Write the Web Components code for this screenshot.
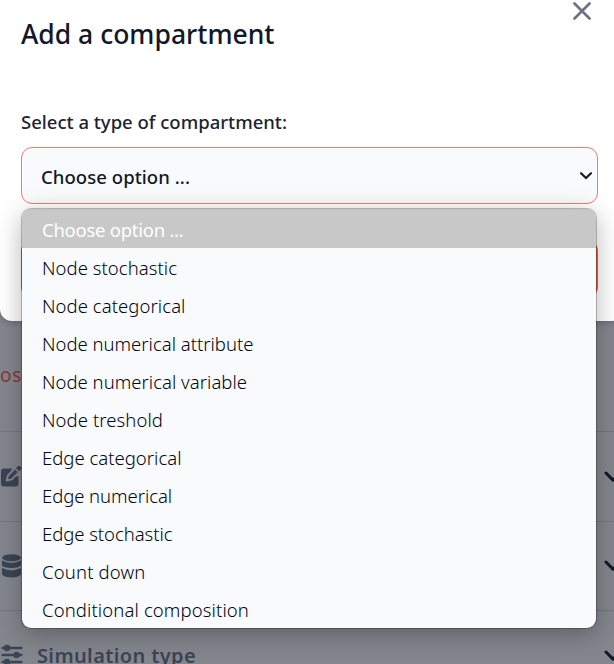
<!DOCTYPE html>
<html lang="en">
<head>
<meta charset="utf-8">
<title>Add a compartment</title>
<style>
html,body{margin:0;height:664px;overflow:hidden}
body{font-family:"Noto Sans","Open Sans",sans-serif;color:#111827;background:#84868e}
</style>
</head>
<body>
<app-screen></app-screen>
<script>
const define = (name, html, setup) => customElements.define(name, class extends HTMLElement {
  connectedCallback() {
    if (this.shadowRoot) return;
    const t = document.createElement('template');
    t.innerHTML = html;
    this.attachShadow({mode: 'open'}).append(t.content.cloneNode(true));
    if (setup) setup(this, this.shadowRoot);
  }
});

// A single line of text, tracked so that it fills the width given in "w".
define('fit-text', `<style>:host{display:block;white-space:nowrap}span{display:inline-block}</style><span><slot></slot></span>`,
  (el, root) => {
    const s = root.querySelector('span');
    const n = el.textContent.length;
    s.style.letterSpacing = ((+el.getAttribute('w') - s.getBoundingClientRect().width) / n) + 'px';
  });

const icons = {
  close: ['0 0 18 18', '<path d="M1.5 1.5 16.5 16.5M16.5 1.5 1.5 16.5" fill="none" stroke="currentColor" stroke-width="2.700" stroke-linecap="round"/>'],
  chevron: ['0 0 12 8', '<path d="M1 1.2 6 6 11 1.2" fill="none" stroke="currentColor" stroke-width="2.1" stroke-linecap="round" stroke-linejoin="miter"/>'],
  bigchevron: ['0 0 18 12', '<path d="M2 2 9 9.2 16 2" fill="none" stroke="currentColor" stroke-width="3" stroke-linecap="round" stroke-linejoin="round"/>'],
  edit: ['0 0 22 22', '<path d="M4 3.500H14V19H4Z M4 3.500H18.500V18.500Q18.500 21.500 15.500 21.500H4Q1 21.500 1 18.500V6.500Q1 3.500 4 3.500Z" fill="currentColor"/><path d="M12.500 2H20V11L15.500 11.500 9 12Z" fill="#84868e"/><path d="M7 15.500 8.300 10.800 14.800 4.300 18 7.500 11.500 14ZM16 3.100 17.600 1.500Q19.300.400 20.700 1.800T20.800 4.700L19.200 6.300Z" fill="currentColor"/><path d="M14.600 3.800 7.900 10.500 6.700 15.500 11.800 14.300 18.500 7.600" fill="none" stroke="#84868e" stroke-width="1.900" stroke-linejoin="round"/>'],
  database: ['0 0 20 24', '<g fill="currentColor"><ellipse cx="10" cy="3.700" rx="10" ry="3.500"/><path d="M0 6.500q10 4.800 20 0v4.500c-1 4-19 4-20 0z"/><path d="M0 14q10 4.800 20 0v6c-1 4.500-19 4.500-20 0z"/></g>'],
  sliders: ['0 0 22 22', '<g fill="none" stroke="currentColor" stroke-width="2.300" stroke-linecap="round"><path d="M1.500 4h19M1.500 11h19M1.500 18h19"/></g><g fill="currentColor"><circle cx="6" cy="4" r="3.200"/><circle cx="15.500" cy="11" r="3.200"/><circle cx="6" cy="18" r="3.200"/></g>']
};
define('ui-icon', `<style>:host{display:block;flex:none}svg{display:block;width:100%;height:100%}</style><svg></svg>`,
  (el, root) => {
    const s = root.querySelector('svg'), i = icons[el.getAttribute('name')];
    s.setAttribute('viewBox', i[0]);
    s.setAttribute('preserveAspectRatio', 'none');
    s.innerHTML = i[1];
  });

define('accordion-row', `<style>
:host{display:flex;align-items:center;box-sizing:border-box;height:89.500px;border-top:1px solid #74777f;color:#3b4454;font-size:20px;font-weight:600}
.label{margin-left:14px;flex:1}
ui-icon.arrow{width:18px;height:12px;color:#111827;margin:1px -8px 0 0}
::slotted(ui-icon){width:22px;height:22px}
</style><slot name="icon"></slot><div class="label"><slot></slot></div><ui-icon class="arrow" name="bigchevron"></ui-icon>`);

define('settings-panel', `<style>
:host{display:flex;flex-direction:column;width:614px;height:664px;overflow:hidden}
.link{flex:none;height:56px;margin-top:375px;font-size:19px;line-height:24px;color:#853b36}
.link fit-text{margin-top:-12px}
accordion-row{flex:none}
</style>
<div class="link"><fit-text w="22">os</fit-text></div>
<accordion-row><ui-icon slot="icon" name="edit"></ui-icon></accordion-row>
<accordion-row><ui-icon slot="icon" name="database" style="width:19px;height:24px;margin-left:2px"></ui-icon></accordion-row>
<accordion-row><ui-icon slot="icon" name="sliders" style="margin-left:1px"></ui-icon><fit-text w="159">Simulation type</fit-text></accordion-row>`);

define('select-box', `<style>
:host{display:flex;align-items:center;justify-content:space-between;box-sizing:border-box;height:57px;padding:2px 5px 0 19px;border:1px solid #f37d63;border-radius:11px;background:#f9fafb;font-size:18.500px;font-weight:480}
ui-icon{width:12px;height:8px;margin-top:-1px}
fit-text{margin-top:-1px}
</style><slot></slot><ui-icon name="chevron"></ui-icon>`);

define('modal-dialog', `<style>
:host{display:flex;flex-direction:column;box-sizing:border-box;width:624px;height:321px;padding:0 26px 0 21px;background:#fff;border-radius:0 0 12px 12px}
header{display:flex;justify-content:space-between;height:109px}
h1{margin:16px 0 0;font-size:26.500px;line-height:36px;font-weight:470}
header ui-icon{width:18px;height:18px;margin:2px 7px 0 0;color:#6b7280}
label{height:38px;font-size:18.500px;line-height:26px;font-weight:460;color:#1b2433}
button{display:block;width:100%;height:58px;margin-top:36px;padding:0;border:0;border-radius:11px;background:#f0603c}
</style>
<header><h1><fit-text w="253.500">Add a compartment</fit-text></h1><ui-icon name="close"></ui-icon></header>
<label><fit-text w="266">Select a type of compartment:</fit-text></label>
<select-box><fit-text w="149">Choose option ...</fit-text></select-box>
<button aria-label="Add"></button>`);

define('option-item', `<style>
:host{display:flex;align-items:center;box-sizing:border-box;height:38px;padding:0 0 0 20px;font-size:18.500px;font-weight:350;color:#000510}
:host([selected]){height:39px;padding-top:2px;background:#c8c8c8;color:#fff;font-weight:400;box-shadow:inset 0 1px #c0c0c0}
</style><slot></slot>`);

define('option-list', `<style>
:host{display:block;box-sizing:border-box;width:576px;height:421px;border:1px solid rgba(0,0,0,.24);border-radius:10px;overflow:hidden;background:#f9fafc padding-box;box-shadow:0 6px 24px rgba(0,0,0,.28)}
</style><slot></slot>`);

define('app-screen', `<style>
:host{display:block;position:relative;width:614px;height:664px;overflow:hidden}
modal-dialog{position:absolute;left:0;top:0;box-shadow:0 2px 6px rgba(0,0,0,.2)}
option-list{position:absolute;left:21px;top:208px}
</style>
<settings-panel></settings-panel>
<modal-dialog></modal-dialog>
<option-list></option-list>`, (el, root) => {
  const items = [['Choose option ...',141.5],['Node stochastic',135],['Node categorical',143.5],['Node numerical attribute',211.5],['Node numerical variable',205],['Node treshold',121],['Edge categorical',139.5],['Edge numerical',130],['Edge stochastic',130.5],['Count down',103.5],['Conditional composition',207]];
  root.querySelector('option-list').innerHTML = items.map(([t, w], i) =>
    `<option-item${i ? '' : ' selected'}><fit-text w="${w}">${t}</fit-text></option-item>`).join('');
});
</script>
</body>
</html>
